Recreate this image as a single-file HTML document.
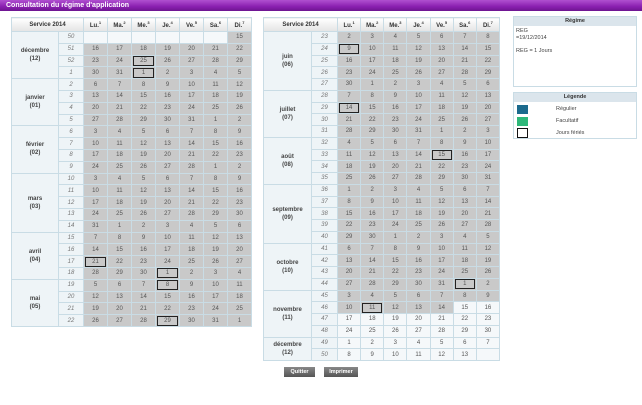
<!DOCTYPE html>
<html><head><meta charset="utf-8"><style>
*{margin:0;padding:0;box-sizing:border-box}
body{width:642px;height:405px;background:#fff;font-family:"Liberation Sans",sans-serif;position:relative;overflow:hidden;color:#555}
.title{position:absolute;left:0;top:0;width:642px;height:11px;background:linear-gradient(#b050d0,#8a1fb0 60%,#6d1590);color:#fff;font-weight:bold;font-size:7px;line-height:11px;padding-left:6px}
table{position:absolute;border-collapse:collapse;table-layout:fixed;font-size:6px}
td,th{border:1px solid #c9dce5;text-align:center;padding:0;overflow:hidden;white-space:nowrap}
th{background:linear-gradient(#fff,#e4e4e4);font-weight:bold;color:#333;height:14px}
th sup{font-size:4px}
td.m{background:#eef4f7;font-weight:bold;color:#444;line-height:8px}
td.w{background:#eef4f7;font-style:italic;color:#777}
td.g{background:#c9c9c9}
td.b{background:#f5f8fa}
td span.h{display:inline-block;border:1.5px solid #222;width:90%;line-height:8px}
.box{position:absolute;border:1px solid #c9dce5;font-size:5.5px;color:#444}
.box .hd{background:#dbe5ec;text-align:center;font-weight:bold;height:9px;line-height:9px;color:#333}
.btn{position:absolute;top:367px;height:10px;background:linear-gradient(#888,#555);color:#fff;font-size:5.5px;font-weight:bold;text-align:center;line-height:10px}
</style></head><body>
<div class="title">Consultation du régime d'application</div>
<table id="t1" style="left:11px;top:17px;width:241px"></table>
<table id="t2" style="left:263px;top:17px;width:237px"></table>
<div class="box" style="left:513px;top:16px;width:124px;height:71px"><div class="hd">Régime</div><div style="padding:2px 2px;line-height:6.5px">REG<br>=19/12/2014<br><br>REG = 1 Jours</div></div>
<div class="box" style="left:513px;top:92px;width:124px;height:47px"><div class="hd">Légende</div>
<div style="position:absolute;left:3px;top:12px;width:11px;height:9px;background:#1b6a8d"></div><div style="position:absolute;left:42px;top:13px">Régulier</div>
<div style="position:absolute;left:3px;top:24px;width:11px;height:9px;background:#2eb87a"></div><div style="position:absolute;left:42px;top:25px">Facultatif</div>
<div style="position:absolute;left:3px;top:35px;width:11px;height:10px;border:1.5px solid #111;background:#fff"></div><div style="position:absolute;left:42px;top:37px">Jours fériés</div></div>
<div class="btn" style="left:284px;width:31px">Quitter</div>
<div class="btn" style="left:324px;width:34px">Imprimer</div>
<script>
var MN=["janvier","février","mars","avril","mai","juin","juillet","août","septembre","octobre","novembre","décembre"];
var HOL=["2013-12-25","2014-01-01","2014-04-21","2014-05-01","2014-05-08","2014-05-29","2014-06-09","2014-07-14","2014-08-15","2014-11-01","2014-11-11"];
var GS=Date.UTC(2013,11,15),GE=Date.UTC(2014,10,14),BS=GS,BE=Date.UTC(2014,11,13);
function iso(d){var t=new Date(d);var dn=t.getUTCDay()||7;t.setUTCDate(t.getUTCDate()+4-dn);var ys=Date.UTC(t.getUTCFullYear(),0,1);return Math.ceil(((t-ys)/864e5+1)/7);}
function build(id,start,n,mw,ww,rh){
var D=864e5,h='<colgroup><col style="width:'+mw+'px"><col style="width:'+ww+'px">'+'<col>'.repeat(7)+'</colgroup>';
h+='<tr><th colspan=2>Service 2014</th>';["Lu.","Ma.","Me.","Je.","Ve.","Sa.","Di."].forEach(function(x,i){h+='<th>'+x+'<sup>'+(i+1)+'</sup></th>'});h+='</tr>';
var weeks=[];for(var i=0;i<n;i++)weeks.push(start+i*7*D);
var groups=[];weeks.forEach(function(w){var m=new Date(w).getUTCMonth();if(!groups.length||groups[groups.length-1].m!=m)groups.push({m:m,c:0});groups[groups.length-1].c++;});
var gi=0,left=0;
weeks.forEach(function(w){h+='<tr style="height:'+rh+'px">';
if(left==0){var g=groups[gi++];left=g.c;h+='<td class="m" rowspan='+g.c+'>'+MN[g.m]+'<br>('+String(g.m+1).padStart(2,'0')+')</td>';}
left--;h+='<td class="w">'+iso(w)+'</td>';
for(var k=0;k<7;k++){var d=w+k*D;var dt=new Date(d);var s=dt.toISOString().slice(0,10);
if(d<BS||d>BE){h+='<td class="b"></td>';continue;}
var c=(d>=GS&&d<=GE)?'g':'b';var v=dt.getUTCDate();
h+='<td class="'+c+'">'+(HOL.indexOf(s)>=0?'<span class="h">'+v+'</span>':v)+'</td>';}
h+='</tr>';});
document.getElementById(id).innerHTML=h;}
build('t1',Date.UTC(2013,11,9),25,47,25,11.8);
build('t2',Date.UTC(2014,5,2),28,48,26,11.75);
</script>
</body></html>
